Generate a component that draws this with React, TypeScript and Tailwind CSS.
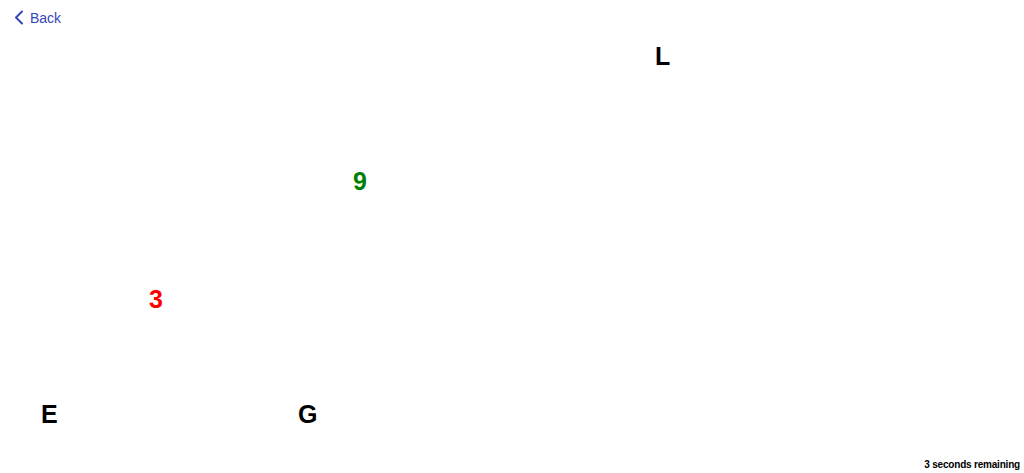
import React from "react";

type Item = { ch: string; x: number; y: number; color: string };

const items: Item[] = [
  { ch: "L", x: 655, y: 44, color: "#000000" },
  { ch: "9", x: 353, y: 169, color: "#008000" },
  { ch: "3", x: 149, y: 287, color: "#ff0000" },
  { ch: "E", x: 41, y: 402, color: "#000000" },
  { ch: "G", x: 298, y: 402, color: "#000000" },
];

export default function App() {
  return (
    <div
      className="relative w-[1024px] h-[473px] bg-white overflow-hidden"
      style={{ fontFamily: '"Liberation Sans", Arial, sans-serif' }}
    >
      <button className="absolute left-[14px] top-[10px] flex items-center gap-[6px] text-[#3446b8] text-[14px] leading-none">
        <svg width="10" height="15" viewBox="0 0 10 15" fill="none">
          <path d="M8 1.5 L2 7.5 L8 13.5" stroke="#3446b8" strokeWidth="2" strokeLinecap="round" strokeLinejoin="round" />
        </svg>
        <span>Back</span>
      </button>

      {items.map((it) => (
        <div
          key={it.ch}
          className="absolute text-[25px] font-bold leading-none"
          style={{ left: it.x, top: it.y, color: it.color }}
        >
          {it.ch}
        </div>
      ))}

      <div className="absolute right-[4px] bottom-[3px] text-[10px] font-bold tracking-[-0.2px] text-black leading-none">
        3 seconds remaining
      </div>
    </div>
  );
}
